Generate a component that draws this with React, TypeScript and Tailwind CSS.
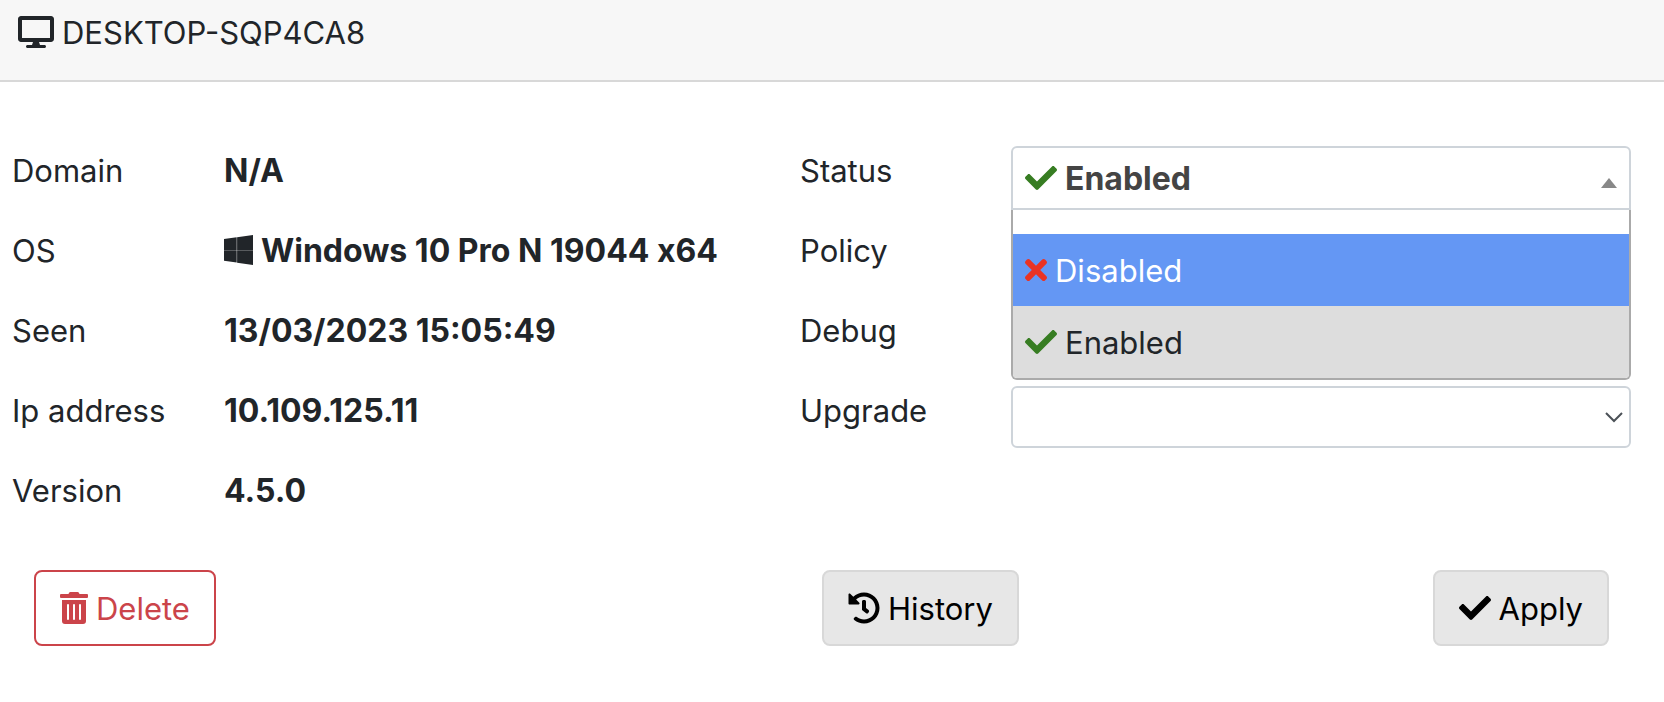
import type { ReactNode } from "react";
import { FaCheck, FaDesktop, FaHistory, FaTimes, FaTrashAlt } from "react-icons/fa";

const COLUMNS = "grid grid-cols-[788fr_831fr] pr-[33px] pl-3";
const ICON = "h-8 shrink-0";

// Inter sits slightly high in its line box, so every text shares this padding.
const TEXT = "block pt-0.5 leading-[46px]";
const REGULAR = `${TEXT} text-[31px]`;
const BOLD = `${TEXT} text-[32px] font-bold`;

function WindowsLogo() {
  return (
    <svg className="h-[30px] w-[29px] shrink-0" viewBox="0 0 29 30" fill="currentColor" aria-hidden="true">
      <path d="M0 4L12.7 2.3V14.9H0z" />
      <path d="M13.1 2.2L29 0V14.9H13.1z" />
      <path d="M0 15.3H12.7V27.6L0 25.8z" />
      <path d="M13.1 15.3H29V30L13.1 27.7z" />
    </svg>
  );
}

function Detail({ label, icon, children }: { label: string; icon?: ReactNode; children: ReactNode }) {
  return (
    <div className="grid h-12 grid-cols-[212px_1fr]">
      <dt className={REGULAR}>{label}</dt>
      <dd className="flex items-center gap-2">
        {icon}
        <span className={BOLD}>{children}</span>
      </dd>
    </div>
  );
}

function Field({ id, label, children }: { id: string; label: string; children: ReactNode }) {
  return (
    <div className="grid h-12 grid-cols-[211px_1fr]">
      <label htmlFor={id} className={REGULAR}>
        {label}
      </label>
      {children}
    </div>
  );
}

function SelectBox({ id }: { id: string }) {
  return (
    <div className="relative h-[62px]">
      <select
        id={id}
        className="h-full w-full appearance-none rounded-md border-2 border-[#ced4da] bg-white px-3"
      >
        <option value="" />
      </select>
      <svg
        className="pointer-events-none absolute top-[25px] right-2 h-3 w-[18px]"
        viewBox="0 0 18 12"
        fill="none"
        stroke="#4b5157"
        strokeWidth="2"
        aria-hidden="true"
      >
        <path d="M1 2l8 8 8-8" />
      </svg>
    </div>
  );
}

function StatusPicker() {
  return (
    <div className="relative z-10">
      <button
        id="status"
        type="button"
        aria-haspopup="listbox"
        aria-expanded="true"
        className="flex h-16 w-full items-center gap-2 rounded-t-md border-2 border-[#ced4da] bg-white px-3 text-[#444]"
      >
        <FaCheck className={`${ICON} w-8 text-[#377d22]`} />
        <span className={BOLD}>Enabled</span>
        <svg className="mt-2.5 ml-auto h-[10px] w-4" viewBox="0 0 16 10" fill="#888" aria-hidden="true">
          <path d="M8 0l8 10H0z" />
        </svg>
      </button>
      <ul
        role="listbox"
        aria-labelledby="status"
        className="absolute inset-x-0 top-16 overflow-hidden rounded-b-md border-x-2 border-b-2 border-[#aaa] bg-white pt-6"
      >
        <li
          role="option"
          aria-selected="false"
          className="flex items-center gap-2 bg-[#6497f4] px-3 py-3 text-white"
        >
          <FaTimes className={`${ICON} w-[22px] text-[#ea3323]`} />
          <span className={REGULAR}>Disabled</span>
        </li>
        <li
          role="option"
          aria-selected="true"
          className="flex items-center gap-2 bg-[#ddd] px-3 py-3"
        >
          <FaCheck className={`${ICON} w-8 text-[#377d22]`} />
          <span className={REGULAR}>Enabled</span>
        </li>
      </ul>
    </div>
  );
}

const BUTTON = "flex items-center gap-2 rounded-lg border-2 px-6 py-3";
const NEUTRAL = "border-[#d8d8d8] bg-[#e7e7e7] text-black";

export default function App() {
  return (
    <main className="min-h-screen bg-white font-['Inter',sans-serif] text-[#212529]">
      <header className="border-b-2 border-[#d8d8d8] bg-[#f7f7f7] px-[18px] pt-2 pb-6">
        <h1 className="flex items-center gap-2">
          <FaDesktop className={`${ICON} w-9`} />
          <span className={REGULAR}>DESKTOP-SQP4CA8</span>
        </h1>
      </header>

      <form>
        <div className={`${COLUMNS} pt-16`}>
          <dl className="flex flex-col gap-8">
            <Detail label="Domain">N/A</Detail>
            <Detail label="OS" icon={<WindowsLogo />}>
              <span className="[font-feature-settings:'calt'_0]">Windows 10 Pro N 19044 x64</span>
            </Detail>
            <Detail label="Seen">13/03/2023 15:05:49</Detail>
            <Detail label="Ip address">10.109.125.11</Detail>
            <Detail label="Version">4.5.0</Detail>
          </dl>
          <div className="flex flex-col gap-8">
            <Field id="status" label="Status">
              <StatusPicker />
            </Field>
            <Field id="policy" label="Policy">
              <SelectBox id="policy" />
            </Field>
            <Field id="debug" label="Debug">
              <SelectBox id="debug" />
            </Field>
            <Field id="upgrade" label="Upgrade">
              <SelectBox id="upgrade" />
            </Field>
          </div>
        </div>

        <div className={`${COLUMNS} py-14`}>
          <div className="flex px-[22px]">
            <button type="button" className={`${BUTTON} border-[#cb444a] text-[#cb444a]`}>
              <FaTrashAlt className={`${ICON} w-7`} />
              <span className={REGULAR}>Delete</span>
            </button>
          </div>
          <div className="flex justify-between px-[22px]">
            <button type="button" className={`${BUTTON} ${NEUTRAL}`}>
              <FaHistory className={`${ICON} w-8`} />
              <span className={REGULAR}>History</span>
            </button>
            <button type="button" className={`${BUTTON} ${NEUTRAL}`}>
              <FaCheck className={`${ICON} w-8`} />
              <span className={REGULAR}>Apply</span>
            </button>
          </div>
        </div>
      </form>
    </main>
  );
}
